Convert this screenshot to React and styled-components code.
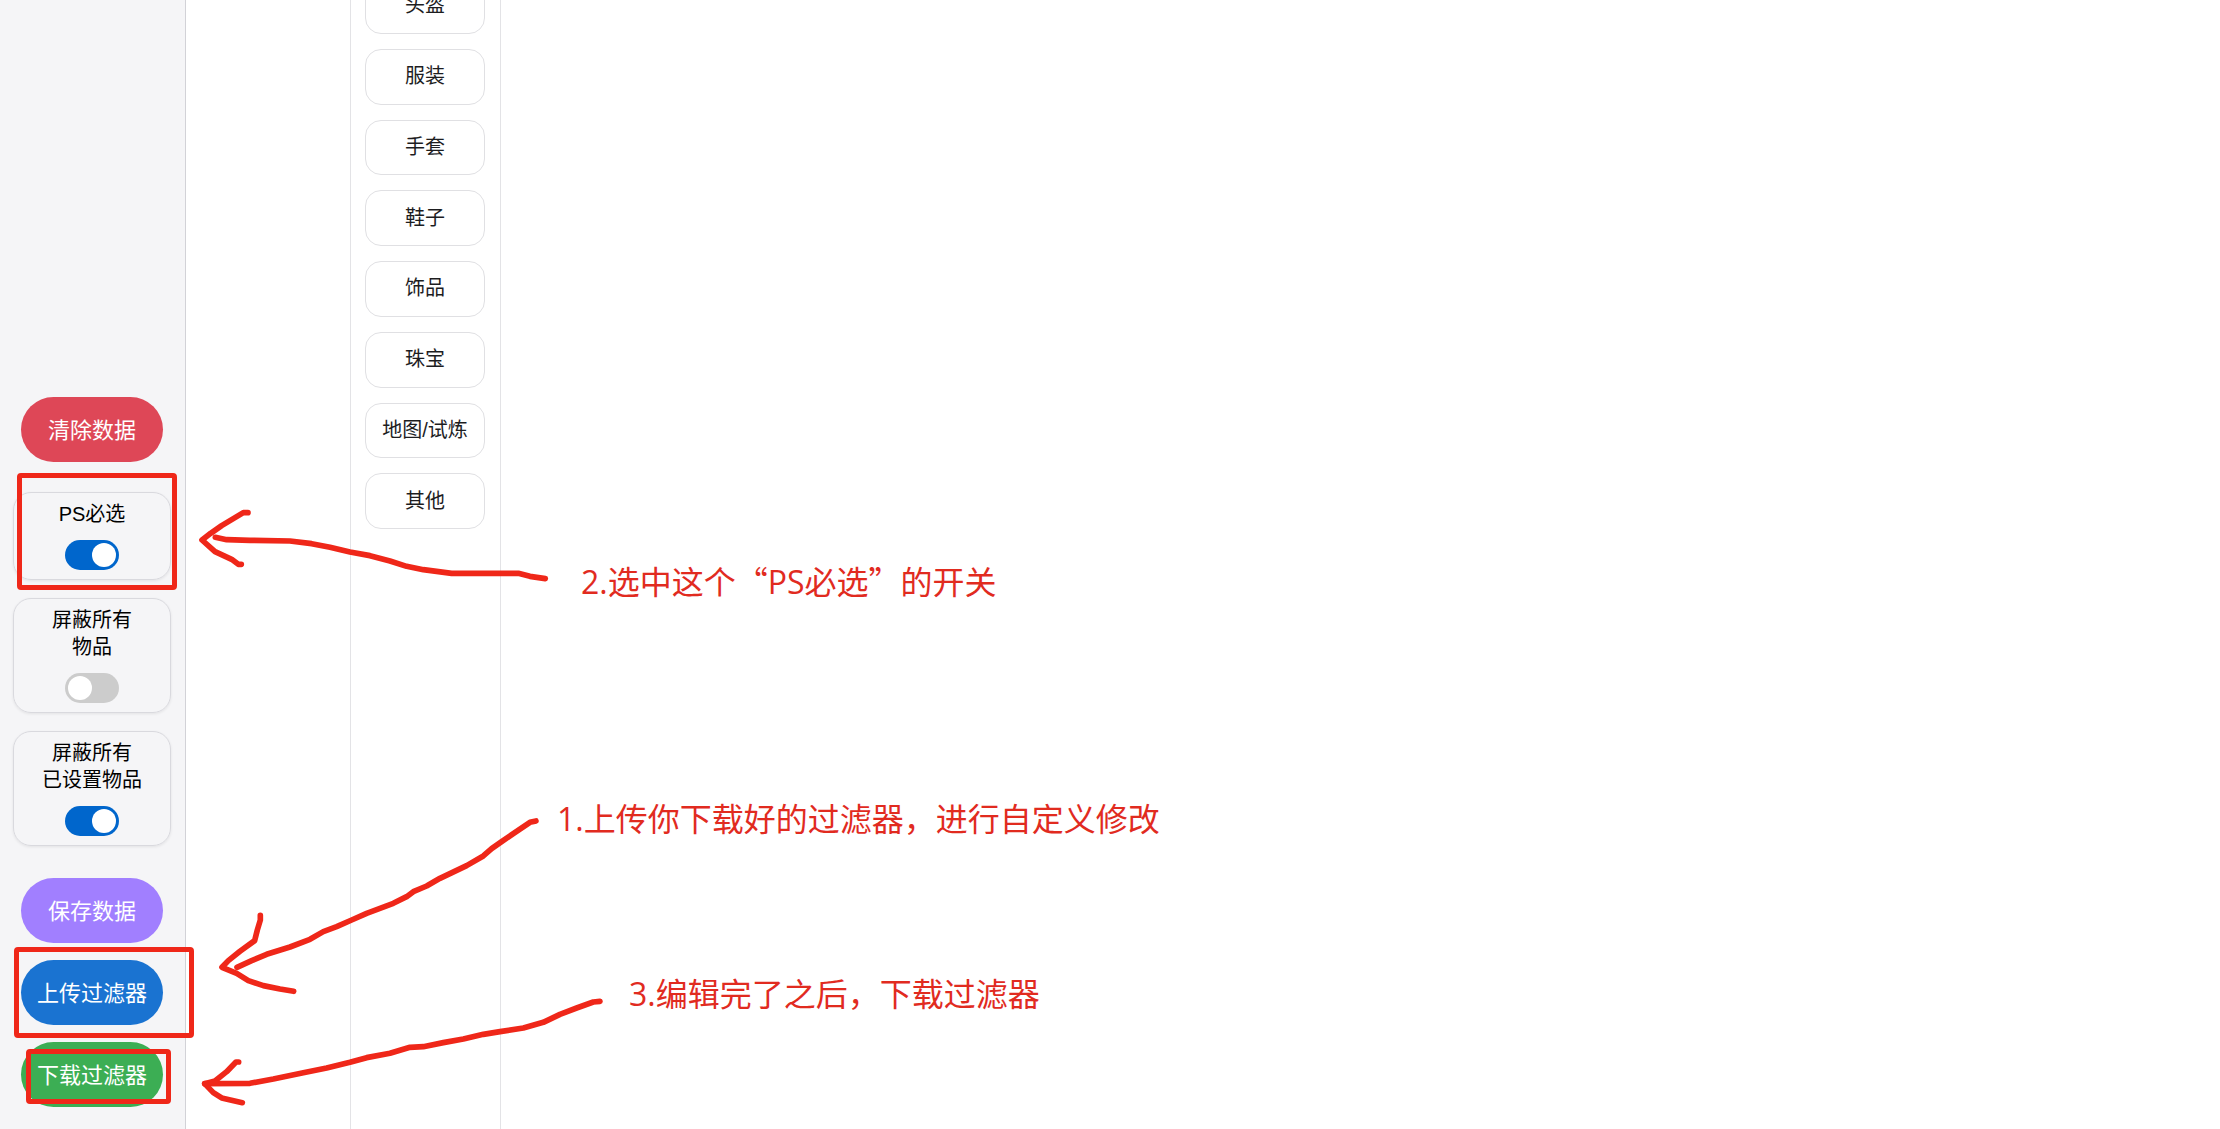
import React from "react";
import styled, { createGlobalStyle } from "styled-components";

const INK = "#ef2719";

const GlobalStyle = createGlobalStyle`
  *, *::before, *::after { box-sizing: border-box; }
  body {
    margin: 0;
    background: #fff;
    font-family: "Liberation Sans", "Noto Sans CJK SC", sans-serif;
    color: #1d1d1f;
  }
`;

const Page = styled.div`
  position: relative;
  display: flex;
  height: 100vh;
  overflow: hidden;
`;

const Sidebar = styled.aside`
  flex: none;
  width: 186px;
  padding: 0 14px 22px 13px;
  display: flex;
  flex-direction: column;
  justify-content: flex-end;
  align-items: center;
  background: #f5f5f7;
  border-right: 1px solid #d2d2d7;
`;

const PillButton = styled.button`
  width: 142px;
  padding: 17px 0 15px;
  border: 0;
  border-radius: 33px;
  background: ${(p) => p.$color};
  color: #fff;
  font: inherit;
  font-size: 22px;
  line-height: 33px;
  cursor: pointer;
`;

const Switches = styled.div`
  align-self: stretch;
  display: flex;
  flex-direction: column;
  gap: 18px;
  margin: 30px 0 32px;
`;

const Actions = styled.div`
  display: flex;
  flex-direction: column;
  gap: 17px;
`;

const SwitchCard = styled.label`
  display: flex;
  flex-direction: column;
  align-items: center;
  gap: 12px;
  padding: 8px 8px 9px;
  border: 1px solid #d9d9de;
  border-radius: 18px;
  box-shadow: 0 1px 3px rgba(0, 0, 0, 0.08);
  color: #000;
  font-size: 20px;
  line-height: 27px;
  text-align: center;
  white-space: pre-line;
  cursor: pointer;
`;

const Switch = styled.input`
  appearance: none;
  display: flex;
  width: 54px;
  height: 30px;
  margin: 0;
  padding: 3px;
  border-radius: 15px;
  background: #ccc;
  cursor: pointer;

  &::before {
    content: "";
    width: 24px;
    height: 24px;
    border-radius: 50%;
    background: #fff;
  }

  &:checked {
    justify-content: flex-end;
    background: #0066cc;
  }
`;

const SubPanel = styled.div`
  flex: none;
  width: 164px;
`;

const CategoryPanel = styled.nav`
  flex: none;
  width: 151px;
  padding: 0 15px 0 14px;
  border: solid #e3e3e6;
  border-width: 0 1px;
`;

const CategoryList = styled.div`
  display: grid;
  grid-auto-rows: 1fr;
  gap: 15px;
  height: 551px;
  margin-top: -22px;
`;

const CategoryButton = styled.button`
  padding: 0;
  border: 1px solid #e0e0e3;
  border-radius: 16px;
  background: #fff;
  color: #1d1d1f;
  font: inherit;
  font-size: 20px;
  line-height: 27px;
  cursor: pointer;
`;

const Workspace = styled.main`
  flex: 1;
`;

const Annotations = styled.div`
  position: absolute;
  inset: 0;
  pointer-events: none;
`;

const Frame = styled.div`
  position: absolute;
  left: ${(p) => p.$x}px;
  top: ${(p) => p.$y}px;
  width: ${(p) => p.$w}px;
  height: ${(p) => p.$h}px;
  border: 5px solid ${INK};
  border-radius: 4px;
`;

const Arrows = styled.svg`
  position: absolute;
  left: 0;
  top: 0;
  width: 640px;
  height: 1129px;
  fill: none;
  stroke: ${INK};
  stroke-width: 17;
  stroke-linejoin: round;
  stroke-linecap: round;
`;

const Note = styled.p`
  position: absolute;
  left: ${(p) => p.$x}px;
  top: ${(p) => p.$y}px;
  margin: 0;
  color: #e12b1f;
  font-family: "Noto Sans CJK SC", sans-serif;
  font-size: 32px;
  line-height: 48px;
  white-space: nowrap;
`;

const Latin = styled.span`
  font-family: "Open Sans", sans-serif;
`;

const switches = [
  { id: "ps", label: "PS必选", on: true },
  { id: "hide-all", label: "屏蔽所有\n物品", on: false },
  { id: "hide-set", label: "屏蔽所有\n已设置物品", on: true },
];

const categories = ["头盔", "服装", "手套", "鞋子", "饰品", "珠宝", "地图/试炼", "其他"];

export default function App() {
  return (
    <Page>
      <GlobalStyle />
      <Sidebar>
        <PillButton type="button" $color="#de4757">清除数据</PillButton>
        <Switches>
          {switches.map((s) => (
            <SwitchCard key={s.id} htmlFor={s.id}>
              {s.label}
              <Switch id={s.id} type="checkbox" defaultChecked={s.on} />
            </SwitchCard>
          ))}
        </Switches>
        <Actions>
          <PillButton type="button" $color="#a17fff">保存数据</PillButton>
          <PillButton type="button" $color="#1a73d1">上传过滤器</PillButton>
          <PillButton type="button" $color="#3cae54">下载过滤器</PillButton>
        </Actions>
      </Sidebar>
      <SubPanel />
      <CategoryPanel>
        <CategoryList>
          {categories.map((c) => (
            <CategoryButton key={c} type="button">{c}</CategoryButton>
          ))}
        </CategoryList>
      </CategoryPanel>
      <Workspace />

      <Annotations>
        <Frame $x={17} $y={473} $w={160} $h={117} />
        <Frame $x={14} $y={947} $w={180} $h={91} />
        <Frame $x={26} $y={1049} $w={145} $h={55} />
        <Arrows viewBox="0 0 640 1129" aria-hidden="true">
          <g transform="translate(190 490) scale(0.3333)">
            <path d="M76 142L110 149L180 151L300 153L365 161L420 172L480 186L540 197L600 213L650 229L700 239L785 250L985 250L1020 259L1066 266" />
            <path d="M174 68L160 68L95 107L62 130L36 150L75 185L125 208L145 223L154 223" />
          </g>
          <g transform="translate(200 800) scale(0.3333)">
            <path d="M1008 63L990 67L940 101L905 125L875 146L850 168L800 197L720 235L680 258L640 275L620 290L580 310L500 340L455 360L410 380L370 395L330 418L270 441L200 463L155 482L111 502" />
            <path d="M181 346L181 360L172 390L164 422L120 454L85 482L66 502L110 520L145 542L190 557L240 567L281 574" />
          </g>
          <g transform="translate(190 980) scale(0.3333)">
            <path d="M1230 64L1210 66L1160 84L1110 103L1060 127L1000 144L930 155L880 163L820 177L760 188L700 200L660 202L600 220L530 233L480 247L410 264L340 278L250 297L180 310L44 311" />
            <path d="M146 246L138 246L110 275L75 303L44 311L70 338L95 354L157 368" />
          </g>
        </Arrows>
        <Note $x={581} $y={556}>
          <Latin>2.</Latin>选中这个“<Latin>PS</Latin>必选”的开关
        </Note>
        <Note $x={557} $y={793}>
          <Latin>1.</Latin>上传你下载好的过滤器，进行自定义修改
        </Note>
        <Note $x={629} $y={968}>
          <Latin>3.</Latin>编辑完了之后，下载过滤器
        </Note>
      </Annotations>
    </Page>
  );
}
